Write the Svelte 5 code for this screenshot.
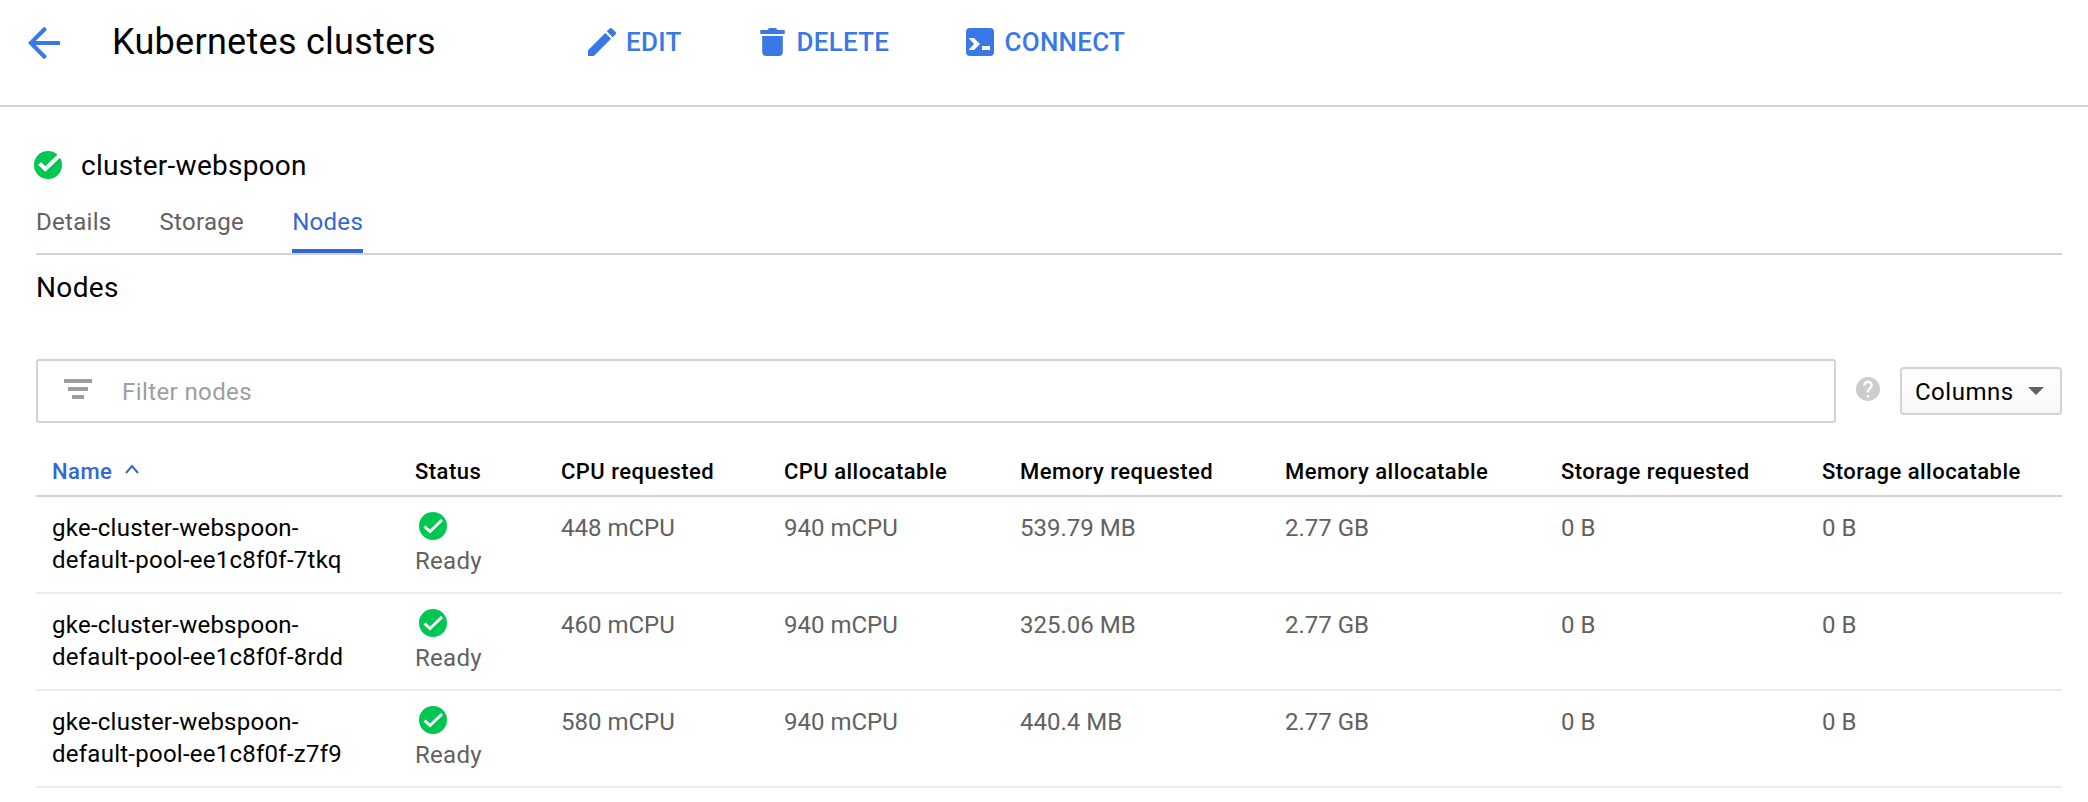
<script>
  const columns = ['Status', 'CPU requested', 'CPU allocatable', 'Memory requested', 'Memory allocatable', 'Storage requested', 'Storage allocatable'];
  const nodes = [
    { id: '7tkq', cells: ['448 mCPU', '940 mCPU', '539.79 MB', '2.77 GB', '0 B', '0 B'] },
    { id: '8rdd', cells: ['460 mCPU', '940 mCPU', '325.06 MB', '2.77 GB', '0 B', '0 B'] },
    { id: 'z7f9', cells: ['580 mCPU', '940 mCPU', '440.4 MB', '2.77 GB', '0 B', '0 B'] }
  ];
</script>

<div class="page">
  <header>
    <svg class="back" viewBox="0 0 24 24"><path d="M20 11H7.830l5.300-5.300a.8.8 0 0 0 0-.9l-.6-.6a.8.8 0 0 0-.9 0L4 12l7.630 7.800a.8.8 0 0 0 .9 0l.6-.6a.8.8 0 0 0 0-.9L7.830 13H20v-2z" /></svg>
    <h1>Kubernetes clusters</h1>
    <nav class="actions">
      <button class="edit"><svg width="28" height="28" viewBox="3 3 18 18"><path d="M3 17.250V21h3.750L17.810 9.940l-3.750-3.750L3 17.250zM20.710 7.040a1 1 0 0 0 0-1.410l-2.340-2.340a1 1 0 0 0-1.410 0l-1.830 1.830 3.750 3.750 1.830-1.830z" /></svg><span>EDIT</span></button>
      <button class="delete"><svg width="25" height="28" viewBox="0 0 25 28"><path d="M.3 2h7.200l1.500-2h7l1.500 2h7.200v4H.3zM2.200 8h20.600v16a4 4 0 0 1-4 4H6.200a4 4 0 0 1-4-4z" /></svg><span>DELETE</span></button>
      <button class="connect"><svg width="28" height="28" viewBox="0 0 28 28"><path fill-rule="evenodd" d="M4 0h20a4 4 0 0 1 4 4v20a4 4 0 0 1-4 4H4a4 4 0 0 1-4-4V4a4 4 0 0 1 4-4zM2.500 10l5.500 6-5.500 6H8l6-6-6-6zM16 18v4h8v-4z" /></svg><span>CONNECT</span></button>
    </nav>
  </header>
  <main>
    <div class="cluster">
      <svg class="ok" viewBox="0 0 28 28"><circle cx="14" cy="14" r="14" /><path d="M5.500 12.500l5.800 5.500L26 4" /></svg>
      <h2>cluster-webspoon</h2>
    </div>
    <div class="tabs">
      <span>Details</span><span>Storage</span><span class="active">Nodes</span>
    </div>
    <h3>Nodes</h3>
    <div class="toolbar">
      <div class="filter">
        <svg width="28" height="20" viewBox="0 0 28 20"><path d="M0 0h28v4H0zM4 8h20v4H4zM8 16h12v4H8z" /></svg>
        <span>Filter nodes</span>
      </div>
      <svg class="help" viewBox="2 2 20 20"><path d="M12 2C6.480 2 2 6.480 2 12s4.480 10 10 10 10-4.480 10-10S17.520 2 12 2zm1 17h-2v-2h2v2zm2.070-7.750l-.9.920C13.450 12.900 13 13.500 13 15h-2v-.5c0-1.100.45-2.100 1.170-2.830l1.240-1.260c.37-.36.59-.86.59-1.410 0-1.100-.9-2-2-2s-2 .9-2 2H8c0-2.210 1.790-4 4-4s4 1.790 4 4c0 .88-.36 1.680-.93 2.250z" /></svg>
      <button class="columns"><span>Columns</span><svg width="16" height="8" viewBox="0 0 16 8"><path d="M0 0h16L8 8z" /></svg></button>
    </div>
    <div class="table">
      <div class="row head">
        <div class="sorted"><span>Name</span><svg width="14" height="10" viewBox="0 0 14 10"><path d="M1 9l6-7 6 7" /></svg></div>
        {#each columns as c}<div><span>{c}</span></div>{/each}
      </div>
      {#each nodes as n}
        <div class="row">
          <div class="name"><span>gke-cluster-webspoon-</span><br /><span>default-pool-ee1c8f0f-{n.id}</span></div>
          <div class="status"><svg class="ok" viewBox="0 0 28 28"><circle cx="14" cy="14" r="14" /><path d="M5.500 14.500l5.500 5L23 8" /></svg><span>Ready</span></div>
          {#each n.cells as v}<div><span>{v}</span></div>{/each}
        </div>
      {/each}
    </div>
  </main>
</div>

<style>
  :global(body) { margin: 0; background: #fff; }
  .page { width: 2088px; height: 802px; overflow: hidden; font: 24px/32px Roboto, sans-serif; color: #000; background: #fff; }
  svg { display: block; flex: none; }
  h1, h2, h3 { margin: 0; font-weight: 400; white-space: nowrap; }
  button { font: inherit; color: inherit; background: none; border: 0; padding: 0; display: flex; align-items: center; white-space: nowrap; letter-spacing: inherit; }
  header { display: flex; align-items: center; height: 84px; padding: 0 0 21px 20px; border-bottom: 2px solid #d3d3d3; color: #3b78e7; fill: currentColor; }
  .back { width: 48px; height: 48px; margin-top: 2px; }
  h1 { width: 476px; margin-left: 44px; color: #000; font-size: 36px; line-height: 48px; letter-spacing: 0.28px; }
  .actions { display: flex; font-size: 26px; font-weight: 500; letter-spacing: 0.25px; }
  .edit { width: 172px; gap: 10px; }
  .delete { width: 206px; gap: 11.500px; }
  .connect { gap: 10.500px; }
  main { padding: 0 26px 0 36px; }
  .cluster { display: flex; align-items: center; height: 28px; margin: 44px 0 0 -2px; gap: 19px; }
  h2 { font-size: 28px; letter-spacing: 0.25px; margin-top: 2px; }
  .ok { width: 28px; height: 28px; fill: #00c752; }
  .ok path { fill: none; stroke: #fff; stroke-width: 4; }
  .tabs { display: flex; gap: 48px; height: 74px; box-sizing: border-box; padding-top: 25px; margin-top: 2px; border-bottom: 2px solid #d3d3d3; color: #616161; letter-spacing: 0.3px; }
  .tabs span { height: 43px; }
  .tabs .active { color: #3367d6; border-bottom: 4px solid #3367d6; }
  h3 { font-size: 28px; line-height: 40px; height: 40px; margin-top: 13px; letter-spacing: 0.35px; }
  .toolbar { display: flex; align-items: center; height: 64px; margin-top: 51px; }
  .filter { width: 1800px; height: 64px; box-sizing: border-box; border: 2px solid #d3d3d3; border-radius: 3px; display: flex; align-items: center; gap: 30px; padding: 1px 0 0 26px; color: #9e9e9e; letter-spacing: 0.4px; }
  .filter svg { fill: #9e9e9e; margin-top: -5px; }
  .help { width: 24px; height: 24px; margin: -4px 20px 0 20px; fill: #ccc; }
  .columns { width: 162px; height: 48px; box-sizing: border-box; border: 2px solid #d3d3d3; border-radius: 4px; background: linear-gradient(#fff, #f8f8f8); padding: 1px 16px 0 13px; justify-content: space-between; letter-spacing: 0.5px; }
  .columns svg { fill: #616161; margin-top: -2px; }
  .table { margin-top: 24px; }
  .row { display: grid; grid-template-columns: 363px 146px 223px 236px 265px 276px 261px 256px; height: 80px; padding-top: 15px; border-bottom: 2px solid #ebebeb; color: #616161; white-space: nowrap; }
  .row > div { padding-left: 16px; }
  .row.head { height: 39px; padding-top: 9px; border-color: #d3d3d3; color: #000; font-size: 22px; font-weight: 500; letter-spacing: 0.48px; }
  .sorted { display: flex; color: #3367d6; gap: 13px; }
  .sorted svg { margin-top: 8px; fill: none; stroke: currentColor; stroke-width: 2; }
  .row .name { color: #000; letter-spacing: 0.25px; }
  .status { letter-spacing: 0.3px; }
  .status .ok { margin: 0 0 5px 4px; }
  .status .ok path { stroke-width: 3; }
</style>
